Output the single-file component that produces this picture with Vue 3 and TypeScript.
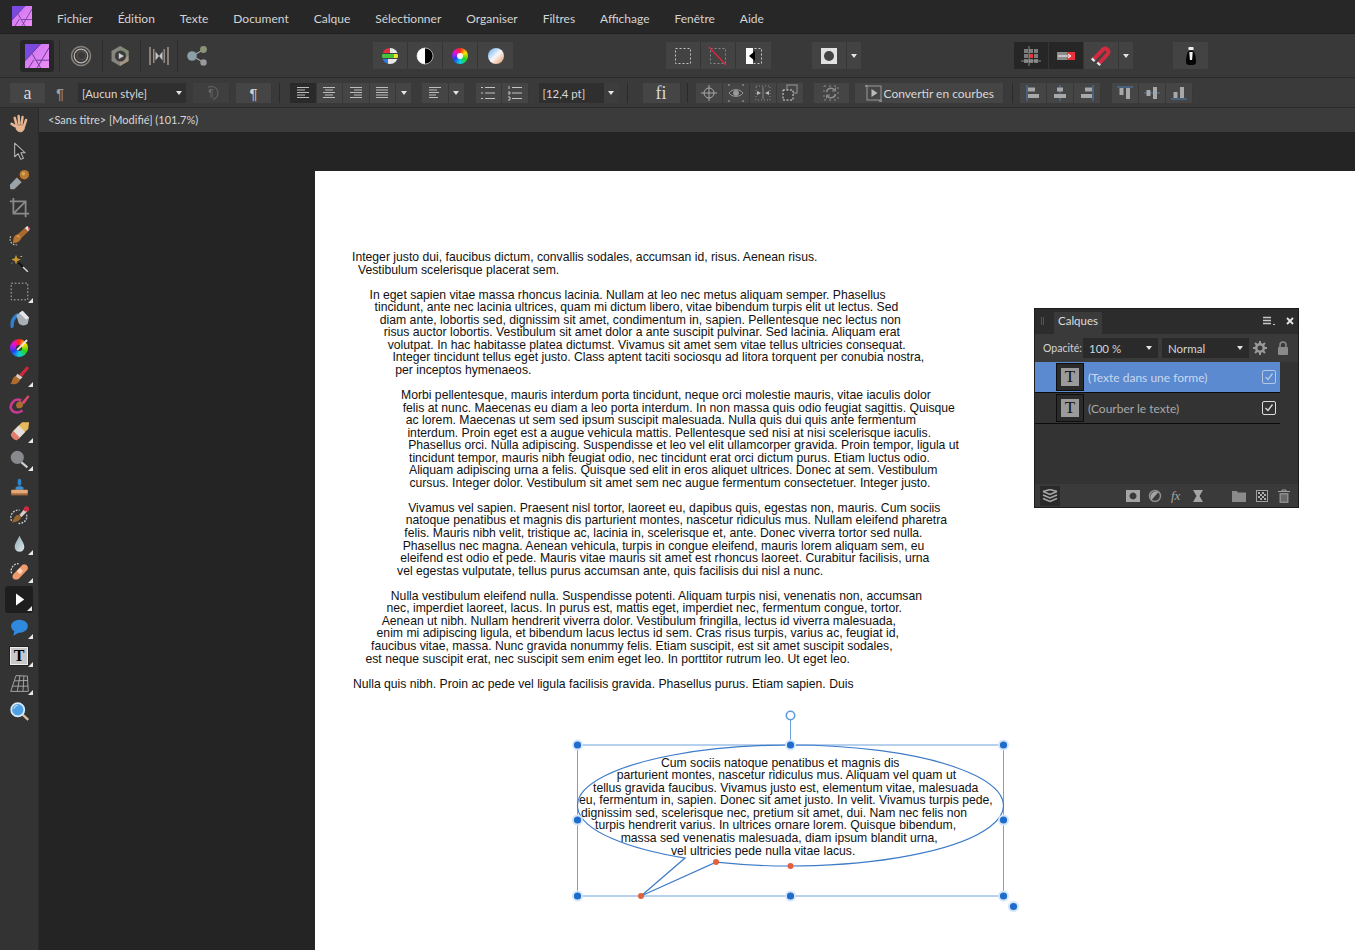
<script setup lang="ts">
type Line = [number, string];

const menus = ["Fichier", "Édition", "Texte", "Document", "Calque", "Sélectionner", "Organiser", "Filtres", "Affichage", "Fenêtre", "Aide"];

// x offset of each line comes from the text frame's curved left edge
const lines: Line[] = [
  [37, "Integer justo dui, faucibus dictum, convallis sodales, accumsan id, risus. Aenean risus."],
  [43, "Vestibulum scelerisque placerat sem."],
  [0, ""],
  [54.5, "In eget sapien vitae massa rhoncus lacinia. Nullam at leo nec metus aliquam semper. Phasellus"],
  [59.6, "tincidunt, ante nec lacinia ultrices, quam mi dictum libero, vitae bibendum turpis elit ut lectus. Sed"],
  [64.8, "diam ante, lobortis sed, dignissim sit amet, condimentum in, sapien. Pellentesque nec lectus non"],
  [68.7, "risus auctor lobortis. Vestibulum sit amet dolor a ante suscipit pulvinar. Sed lacinia. Aliquam erat"],
  [72.7, "volutpat. In hac habitasse platea dictumst. Vivamus sit amet sem vitae tellus ultricies consequat."],
  [77.4, "Integer tincidunt tellus eget justo. Class aptent taciti sociosqu ad litora torquent per conubia nostra,"],
  [80.2, "per inceptos hymenaeos."],
  [0, ""],
  [86, "Morbi pellentesque, mauris interdum porta tincidunt, neque orci molestie mauris, vitae iaculis dolor"],
  [87.7, "felis at nunc. Maecenas eu diam a leo porta interdum. In non massa quis odio feugiat sagittis. Quisque"],
  [90.8, "ac lorem. Maecenas ut sem sed ipsum suscipit malesuada. Nulla quis dui quis ante fermentum"],
  [92.4, "interdum. Proin eget est a augue vehicula mattis. Pellentesque sed nisi at nisi scelerisque iaculis."],
  [93.2, "Phasellus orci. Nulla adipiscing. Suspendisse et leo vel elit ullamcorper gravida. Proin tempor, ligula ut"],
  [94, "tincidunt tempor, mauris nibh feugiat odio, nec tincidunt erat orci dictum purus. Etiam luctus odio."],
  [94, "Aliquam adipiscing urna a felis. Quisque sed elit in eros aliquet ultrices. Donec at sem. Vestibulum"],
  [94.4, "cursus. Integer dolor. Vestibulum sit amet sem nec augue fermentum consectetuer. Integer justo."],
  [0, ""],
  [93.2, "Vivamus vel sapien. Praesent nisl tortor, laoreet eu, dapibus quis, egestas non, mauris. Cum sociis"],
  [90.8, "natoque penatibus et magnis dis parturient montes, nascetur ridiculus mus. Nullam eleifend pharetra"],
  [89.3, "felis. Mauris nibh velit, tristique ac, lacinia in, scelerisque et, ante. Donec viverra tortor sed nulla."],
  [87.7, "Phasellus nec magna. Aenean vehicula, turpis in congue eleifend, mauris lorem aliquam sem, eu"],
  [85.3, "eleifend est odio et pede. Mauris vitae mauris sit amet est rhoncus laoreet. Curabitur facilisis, urna"],
  [82.1, "vel egestas vulputate, tellus purus accumsan ante, quis facilisis dui nisl a nunc."],
  [0, ""],
  [75.8, "Nulla vestibulum eleifend nulla. Suspendisse potenti. Aliquam turpis nisi, venenatis non, accumsan"],
  [71.5, "nec, imperdiet laoreet, lacus. In purus est, mattis eget, imperdiet nec, fermentum congue, tortor."],
  [66.7, "Aenean ut nibh. Nullam hendrerit viverra dolor. Vestibulum fringilla, lectus id viverra malesuada,"],
  [61.6, "enim mi adipiscing ligula, et bibendum lacus lectus id sem. Cras risus turpis, varius ac, feugiat id,"],
  [56, "faucibus vitae, massa. Nunc gravida nonummy felis. Etiam suscipit, est sit amet suscipit sodales,"],
  [50.5, "est neque suscipit erat, nec suscipit sem enim eget leo. In porttitor rutrum leo. Ut eget leo."],
  [0, ""],
  [37.9, "Nulla quis nibh. Proin ac pede vel ligula facilisis gravida. Phasellus purus. Etiam sapien. Duis"],
];

const bubbleLines: Line[] = [
  [346, "Cum sociis natoque penatibus et magnis dis"],
  [301.7, "parturient montes, nascetur ridiculus mus. Aliquam vel quam ut"],
  [278, "tellus gravida faucibus. Vivamus justo est, elementum vitae, malesuada"],
  [264, "eu, fermentum in, sapien. Donec sit amet justo. In velit. Vivamus turpis pede,"],
  [266, "dignissim sed, scelerisque nec, pretium sit amet, dui. Nam nec felis non"],
  [280, "turpis hendrerit varius. In ultrices ornare lorem. Quisque bibendum,"],
  [305.7, "massa sed venenatis malesuada, diam ipsum blandit urna,"],
  [356, "vel ultricies pede nulla vitae lacus."],
];

const blueHandles = [
  [12.5, 45], [225.5, 45], [438.5, 45],
  [12.5, 120], [438.5, 120],
  [12.5, 196], [225.5, 196], [438.5, 196],
  [448.5, 206.5],
];
const redHandles = [[76, 196], [151, 162], [225.5, 166]];
</script>

<template>
  <div class="app">
    <header class="menubar">
      <svg class="app-logo" viewBox="0 0 20 20">
        <defs>
          <linearGradient id="lg" x1="0" y1="0" x2="1" y2="1">
            <stop offset="0" stop-color="#c870f0" />
            <stop offset="1" stop-color="#ee8ef6" />
          </linearGradient>
        </defs>
        <rect width="20" height="20" fill="url(#lg)" />
        <path d="M0 0H13L0 14Z" fill="#7a4ae0" />
        <path d="M0 14L13 0M20 3L10 20M6 8L13 20M9.500 13.500H20M3 20L7.500 13" stroke="#6a3a98" stroke-width="0.800" fill="none" />
      </svg>
      <nav class="menu">
        <span v-for="m in menus" :key="m">{{ m }}</span>
      </nav>
    </header>

    <div class="toolbar">
      <div class="persona active">
        <svg width="24" height="24" viewBox="0 0 20 20">
          <rect width="20" height="20" fill="url(#lg)" />
          <path d="M0 0H13L0 14Z" fill="#7a4ae0" />
          <path d="M0 14L13 0M20 3L10 20M6 8L13 20M9.500 13.500H20M3 20L7.500 13" stroke="#6a3a98" stroke-width="0.800" fill="none" />
        </svg>
      </div>
      <i class="tsep s1"></i>
      <div class="persona p2">
        <svg width="24" height="24" viewBox="0 0 24 24" fill="none">
          <circle cx="12" cy="12" r="9.500" stroke="#8a817a" stroke-width="1.500" />
          <circle cx="12" cy="12" r="6.800" stroke="#bdb8b4" stroke-width="1.200" />
          <circle cx="12.500" cy="11.500" r="4.200" stroke="#4f4f4f" stroke-width="1.400" />
        </svg>
      </div>
      <i class="tsep s2"></i>
      <div class="persona p3">
        <svg width="24" height="24" viewBox="0 0 24 24">
          <path d="M12 2L20.500 7V17L12 22L3.500 17V7Z" fill="#85877f" />
          <path d="M12 2L20.500 7V12H12Z" fill="#7f8a74" />
          <path d="M20.500 12V17L12 22V16Z" fill="#a89685" />
          <circle cx="12.500" cy="12" r="5.600" fill="#3c3c3c" />
          <path d="M10.800 9L16 12L10.800 15Z" fill="#cfcfcf" />
        </svg>
      </div>
      <i class="tsep s3"></i>
      <div class="persona p4">
        <svg width="24" height="24" viewBox="0 0 24 24">
          <path d="M2 3h2v18H2z" fill="#8f7d75" />
          <path d="M6 5h1.500v14H6z" fill="#8e8e8e" />
          <path d="M20 3h2v18h-2z" fill="#8f7d75" />
          <path d="M16.500 5H18v14h-1.500z" fill="#8e8e8e" />
          <path d="M8.500 7.500L12 12L8.500 16.500ZM15.500 7.500L12 12L15.500 16.500Z" fill="#c4c4c4" />
        </svg>
      </div>
      <i class="tsep s4"></i>
      <div class="persona p5">
        <svg width="24" height="24" viewBox="0 0 24 24">
          <path d="M7 12L18 6M7 12L18 18" stroke="#9aa6a6" stroke-width="1.400" />
          <circle cx="7" cy="12" r="4.800" fill="#8c9ea6" />
          <circle cx="18.500" cy="5.500" r="3.400" fill="#8c9476" />
          <circle cx="18.500" cy="18.500" r="3.200" fill="#9a9a9e" />
        </svg>
      </div>

      <div class="group g-colour">
        <button class="tb">
          <svg width="20" height="20" viewBox="0 0 20 20">
            <clipPath id="rgbClip"><circle cx="10" cy="10" r="8" /></clipPath>
            <g clip-path="url(#rgbClip)">
              <rect x="2" y="2" width="8" height="5" fill="#e23040" />
              <rect x="10" y="2" width="8" height="5" fill="#e8e8e8" />
              <rect x="2" y="8" width="12" height="4" fill="#46c43c" />
              <rect x="14" y="8" width="4" height="4" fill="#e8e830" />
              <rect x="2" y="13" width="6" height="5" fill="#2b7ee0" />
              <rect x="8" y="13" width="10" height="5" fill="#e8e8e8" />
            </g>
          </svg>
        </button>
        <button class="tb">
          <svg width="20" height="20" viewBox="0 0 20 20">
            <circle cx="10" cy="10" r="8" fill="#000" stroke="#fff" stroke-width="0.600" />
            <path d="M10 2A8 8 0 0 0 10 18Z" fill="#fff" />
          </svg>
        </button>
        <button class="tb"><span class="wheel"></span></button>
        <button class="tb">
          <svg width="20" height="20" viewBox="0 0 20 20">
            <defs>
              <linearGradient id="ball" x1="0" y1="0" x2="1" y2="1">
                <stop offset="0" stop-color="#5aa6ee" />
                <stop offset="0.500" stop-color="#f8f8f8" />
                <stop offset="1" stop-color="#e69460" />
              </linearGradient>
            </defs>
            <circle cx="10" cy="10" r="8" fill="url(#ball)" />
          </svg>
        </button>
      </div>

      <div class="group g-sel">
        <button class="tb">
          <svg width="20" height="20" viewBox="0 0 20 20"><rect x="2.500" y="2.500" width="15" height="15" fill="none" stroke="#c4c4c4" stroke-dasharray="2 2" /></svg>
        </button>
        <button class="tb">
          <svg width="20" height="20" viewBox="0 0 20 20">
            <rect x="2.500" y="2.500" width="15" height="15" fill="none" stroke="#888" stroke-dasharray="2 2" />
            <path d="M1 1L18 19" stroke="#d02840" stroke-width="1.600" />
          </svg>
        </button>
        <button class="tb">
          <svg width="20" height="20" viewBox="0 0 20 20">
            <rect x="2.500" y="2.500" width="15" height="15" fill="none" stroke="#ccc" stroke-dasharray="2 2" />
            <rect x="2" y="2" width="7" height="16" fill="#fff" />
            <path d="M11 5L5 10L11 15Z" fill="#000" />
          </svg>
        </button>
      </div>

      <div class="group g-mask">
        <button class="tb">
          <svg width="20" height="20" viewBox="0 0 20 20">
            <rect x="2" y="2" width="16" height="16" fill="#e2e2e2" />
            <circle cx="10" cy="10" r="5" fill="#444" />
          </svg>
        </button>
        <button class="tb drop"><i class="caret"></i></button>
      </div>

      <div class="group g-snap">
        <button class="tb dark">
          <svg width="20" height="20" viewBox="0 0 20 20">
            <path d="M3 3h4v4H3zM8 3h4v4H8zM13 3h4v4h-4zM3 8h4v4H3zM13 8h4v4h-4zM3 13h4v4H3zM8 13h4v4H8zM13 13h4v4h-4z" fill="#7c7c7c" />
            <rect x="8" y="8" width="4" height="4" fill="#e8323c" />
            <path d="M0 15h20M8 0v20" stroke="#a0a0a0" stroke-width="0.800" />
          </svg>
        </button>
        <button class="tb dark">
          <svg width="20" height="20" viewBox="0 0 20 20">
            <rect x="1" y="6" width="10" height="8" fill="#8c8c8c" />
            <rect x="11" y="6" width="8" height="8" fill="#e8323c" />
            <path d="M2 10h12M12 8l3 2-3 2" stroke="#fff" fill="none" />
          </svg>
        </button>
        <button class="tb">
          <svg width="22" height="22" viewBox="0 0 22 22" fill="none">
            <path d="M4 14L13 4.500C15.500 2.200 19.500 4.800 18 8.500L9.500 18" stroke="#d32a40" stroke-width="4" />
            <path d="M4 14L2.400 15.600M9.500 18L8 19.600" stroke="#e6e6e6" stroke-width="4" />
          </svg>
        </button>
        <button class="tb drop"><i class="caret"></i></button>
      </div>

      <div class="group g-assist">
        <button class="tb">
          <svg width="20" height="22" viewBox="0 0 20 22">
            <path d="M5 17.500C5 10 6.500 5.500 10 5.500S15 10 15 17.500C15 19.500 13 20 10 20S5 19.500 5 17.500Z" fill="#050505" />
            <path d="M8.300 7h3.400l-.6 8H8.900Z" fill="#f2f2f2" />
            <rect x="7.400" y="2" width="5.200" height="3" rx="1" fill="#f0f0f0" />
          </svg>
        </button>
      </div>
    </div>

    <div class="context">
      <button class="ct c-a"><span class="serif">a</span></button>
      <span class="pilcrow dim">¶</span>
      <div class="select c-style"><span>[Aucun style]</span><i class="caret"></i></div>
      <button class="ct c-par dimbtn">
        <svg width="18" height="18" viewBox="0 0 18 18" fill="none">
          <path d="M6 3.500A6.500 6.500 0 1 1 11 15.300" stroke="#5f5f5f" stroke-width="1.200" />
          <text x="9" y="13" class="mini-p">¶</text>
        </svg>
      </button>
      <button class="ct c-par2"><span class="pilcrow">¶</span></button>
      <i class="csep cs1"></i>

      <div class="cgroup c-align">
        <button class="ct w26 dark">
          <svg width="14" height="14" viewBox="0 0 14 14"><path d="M1 1.500h12M1 4h8M1 6.500h12M1 9h8M1 11.500h12" stroke="#bdbdbd" /></svg>
        </button>
        <button class="ct w26">
          <svg width="14" height="14" viewBox="0 0 14 14"><path d="M1 1.500h12M3 4h8M1 6.500h12M3 9h8M1 11.500h12" stroke="#bdbdbd" /></svg>
        </button>
        <button class="ct w26">
          <svg width="14" height="14" viewBox="0 0 14 14"><path d="M1 1.500h12M5 4h8M1 6.500h12M5 9h8M1 11.500h12" stroke="#bdbdbd" /></svg>
        </button>
        <button class="ct w26">
          <svg width="14" height="14" viewBox="0 0 14 14"><path d="M1 1.500h12M1 4h12M1 6.500h12M1 9h12M1 11.500h12" stroke="#bdbdbd" /></svg>
        </button>
        <button class="ct drop"><i class="caret"></i></button>
      </div>
      <div class="cgroup c-align2">
        <button class="ct w26">
          <svg width="14" height="14" viewBox="0 0 14 14"><path d="M1 1.500h12M1 4h8M1 6.500h10M1 9h7M1 11.500h9" stroke="#bdbdbd" /></svg>
        </button>
        <button class="ct drop"><i class="caret"></i></button>
      </div>
      <div class="cgroup c-list">
        <button class="ct w26">
          <svg width="16" height="16" viewBox="0 0 16 16"><path d="M5 2.500h10M5 8h10M5 13.500h10M1 2.500h2M1 8h2M1 13.500h2" stroke="#c4c4c4" /></svg>
        </button>
        <button class="ct w26">
          <svg width="16" height="16" viewBox="0 0 16 16"><path d="M5 2.500h10M5 8h10M5 13.500h10M2 1v3M1 7h2v2H1M1 12h2v3H1" stroke="#c4c4c4" fill="none" /></svg>
        </button>
      </div>
      <div class="select c-size"><span>[12,4 pt]</span><b class="drop-in"><i class="caret"></i></b></div>
      <i class="csep cs2"></i>
      <button class="ct c-fi"><span class="serif fi">fi</span></button>
      <i class="csep cs3"></i>

      <div class="cgroup c-trans">
        <button class="ct w27">
          <svg width="16" height="16" viewBox="0 0 16 16" fill="none" stroke="#a8a8a8"><circle cx="8" cy="8" r="5" /><path d="M8 0v16M0 8h16" /></svg>
        </button>
        <button class="ct w27">
          <svg width="18" height="18" viewBox="0 0 18 18" fill="none" stroke="#999"><path d="M2 9C5 4.500 13 4.500 16 9C13 13.500 5 13.500 2 9Z" /><circle cx="9" cy="9" r="2.500" fill="#999" /><path d="M1 1h2M15 1h2M1 17h2M15 17h2" stroke="#777" stroke-width="2" /></svg>
        </button>
        <button class="ct w27">
          <svg width="18" height="18" viewBox="0 0 18 18" fill="none" stroke="#888"><rect x="2" y="2" width="14" height="14" stroke-dasharray="1 2" /><path d="M9 3v12" /><path d="M3 7l4 2-4 2ZM15 7l-4 2 4 2Z" fill="#bbb" stroke="none" /></svg>
        </button>
        <button class="ct w27">
          <svg width="18" height="18" viewBox="0 0 18 18" fill="none"><rect x="6" y="1" width="10" height="8" stroke="#999" /><rect x="2" y="6" width="10" height="10" fill="#3f3f3f" stroke="#ddd" stroke-dasharray="2 1.500" /></svg>
        </button>
      </div>
      <button class="ct c-rot">
        <svg width="18" height="18" viewBox="0 0 18 18" fill="none" stroke="#8c8c8c"><rect x="2" y="2" width="14" height="14" stroke-dasharray="2 3" /><path d="M4.500 8A4.600 4.600 0 0 1 13 6.500M13.500 10A4.600 4.600 0 0 1 5 11.500" stroke-width="1.500" /><path d="M13.500 3.500v3.500h-3.500M4.500 14.500V11H8" /></svg>
      </button>
      <button class="ct c-conv">
        <svg width="18" height="18" viewBox="0 0 18 18" fill="none"><rect x="2" y="2" width="14" height="14" stroke="#999" /><path d="M6.500 5l6 4-6 4Z" fill="#bbb" /><path d="M0 2h3M14 17h3" stroke="#888" stroke-width="2" /></svg>
        <span>Convertir en courbes</span>
      </button>
      <i class="csep cs4"></i>

      <div class="cgroup c-al1">
        <button class="ct w27">
          <svg width="18" height="18" viewBox="0 0 18 18"><path d="M3 1v16" stroke="#4d7fb0" /><path d="M4 3.500h7v4H4zM4 10h11v4H4z" fill="#a8a8a8" /></svg>
        </button>
        <button class="ct w27">
          <svg width="18" height="18" viewBox="0 0 18 18"><path d="M9 1v16" stroke="#4d7fb0" /><path d="M6 3.500h6v4H6zM3 10h12v4H3z" fill="#a8a8a8" /></svg>
        </button>
        <button class="ct w27">
          <svg width="18" height="18" viewBox="0 0 18 18"><path d="M15 1v16" stroke="#4d7fb0" /><path d="M7 3.500h7v4H7zM3 10h11v4H3z" fill="#a8a8a8" /></svg>
        </button>
      </div>
      <div class="cgroup c-al2">
        <button class="ct w27">
          <svg width="18" height="18" viewBox="0 0 18 18"><path d="M1 3h16" stroke="#4d7fb0" /><path d="M3.500 4h4v7h-4zM10 4h4v11h-4z" fill="#a8a8a8" /></svg>
        </button>
        <button class="ct w27">
          <svg width="18" height="18" viewBox="0 0 18 18"><path d="M1 9h16" stroke="#4d7fb0" /><path d="M3.500 6h4v6h-4zM10 3h4v12h-4z" fill="#a8a8a8" /></svg>
        </button>
        <button class="ct w27">
          <svg width="18" height="18" viewBox="0 0 18 18"><path d="M1 15h16" stroke="#4d7fb0" /><path d="M3.500 8h4v6h-4zM10 3h4v11h-4z" fill="#a8a8a8" /></svg>
        </button>
      </div>
    </div>

    <div class="work">
      <aside class="tools">
        <div class="tool">
          <svg viewBox="0 0 24 24" fill="none" stroke="#e8b592" stroke-linecap="round">
            <path d="M8.500 13L6.500 5.500M11.500 12L11 3.500M14.500 12L15.500 4.500M17.500 14L19.500 8" stroke-width="2.800" />
            <path d="M7 15L3 12.500" stroke-width="3" />
            <path d="M8 14C7 19 10 21.500 13 21.500S18 19 18 14Z" fill="#e8b592" stroke-width="1" />
          </svg>
        </div>
        <div class="tool">
          <svg viewBox="0 0 24 24"><path d="M6.500 2.500V18L10.500 14.500L13.500 21L16.500 19.700L13.500 13.500H18.500Z" fill="#2a2a2a" stroke="#b8b8b8" stroke-width="1.200" stroke-linejoin="round" /></svg>
        </div>
        <div class="tool">
          <svg viewBox="0 0 24 24">
            <path d="M1.500 23L1 18L9.500 9L15 14.500L6 23Z" fill="#9aa3aa" />
            <path d="M9 8L16 15" stroke="#4c2f14" stroke-width="2.400" />
            <circle cx="17.500" cy="6.500" r="5.400" fill="#b97a32" />
            <circle cx="16.500" cy="5.500" r="2" fill="#d8a860" />
          </svg>
        </div>
        <div class="tool">
          <svg viewBox="0 0 24 24" fill="none" stroke="#8a8a8a" stroke-width="2"><path d="M5 1V19H23M1 5H19V23M5 19L19 5" /></svg>
        </div>
        <div class="tool">
          <svg viewBox="0 0 24 24" fill="none">
            <path d="M9 11.500L18 3.500L22 7.500L13 16Z" fill="#a86a2c" />
            <path d="M18 3.500L21 1L24 4L22 7.500Z" fill="#e8e0dc" />
            <path d="M21.500 1.500L24 4L22.500 6.500Z" fill="#d03c48" />
            <path d="M6 13C9 8.500 15 11.500 13.500 16C11.500 20 7 21 4.500 20.500C5 18 4.500 15.500 6 13Z" fill="#b8752f" />
            <path d="M9 13C10 12 11 12.500 12 14" stroke="#e0b070" stroke-width="1.200" />
            <path d="M2 13C-0.500 18 3.500 23.500 9 22.500" stroke="#d8c8a8" stroke-width="1.300" stroke-dasharray="1.800 1.500" />
          </svg>
        </div>
        <div class="tool">
          <svg viewBox="0 0 24 24">
            <path d="M11 11L21 21" stroke="#111" stroke-width="2.200" />
            <path d="M16 16L21.500 21.500" stroke="#ddd" stroke-width="1.800" />
            <path d="M8 2L9.500 6L13.500 7.500L9.500 9L8 13L6.500 9L2.500 7.500L6.500 6Z" fill="#c8982c" />
            <path d="M13 4h2M3 12l1-1" stroke="#d8c070" />
          </svg>
        </div>
        <div class="tool more">
          <svg viewBox="0 0 24 24"><rect x="2.500" y="2.500" width="19" height="19" fill="none" stroke="#bdbdbd" stroke-dasharray="2 2" /></svg>
        </div>
        <div class="tool">
          <svg viewBox="0 0 24 24">
            <path d="M2 21C0.500 13 4 7 10 4.500L12.500 8C8 9.500 5.500 13.500 5.500 19C5.500 21.500 2.500 22.500 2 21Z" fill="#2d7fd0" />
            <path d="M8.500 7L15.500 2L23 10L21.500 16.500C18 20 13 19 11 16Z" fill="#a8b0b6" />
            <path d="M15.500 2L23 10L19.500 12L11.500 4.500Z" fill="#e4e7ea" />
          </svg>
        </div>
        <div class="tool">
          <span class="wheel tool-wheel"></span>
          <svg class="over" viewBox="0 0 24 24"><path d="M10 13L20 3" stroke="#e8e8e8" stroke-width="2.400" stroke-linecap="round" /></svg>
        </div>
        <div class="tool more">
          <svg viewBox="0 0 24 24">
            <path d="M11.500 11L20.500 1.500L23 3.500L15 13.500Z" fill="#d0283c" />
            <path d="M9.500 10L15.500 14L12 17L7 14Z" fill="#d8d0c8" />
            <path d="M7.500 12.500C3 14 4.500 19 1.500 21.500C7 23 12 21 12.500 16.500Z" fill="#b06c2c" />
          </svg>
        </div>
        <div class="tool">
          <svg viewBox="0 0 24 24" fill="none">
            <path d="M14 8.500C6 4.500 -1 14.500 3.500 20C7 23.500 12 22.500 15.500 20" stroke="#c83a92" stroke-width="3" />
            <path d="M15 10C9 7 5.500 15.500 10.500 17.500C14.500 18 18 15 15 10Z" fill="#a96c33" />
            <path d="M14.500 10.500L21.500 2.500L23.500 4L17 13" fill="#d84a66" />
          </svg>
        </div>
        <div class="tool more">
          <svg viewBox="0 0 24 24">
            <path d="M15 1.500L23 1.500L22 9L11 19L4 12Z" fill="#e8b85c" />
            <path d="M11 5L18.500 12.500L11 20.500L3.500 13.500Z" fill="#e4e0dc" />
            <path d="M5 11.500L12.500 19L9 22C6 22 2.500 18.500 2 15Z" fill="#e27c6c" />
          </svg>
        </div>
        <div class="tool more">
          <svg viewBox="0 0 24 24">
            <path d="M14 15L21 21" stroke="#cfcfcf" stroke-width="2.400" />
            <circle cx="9.500" cy="9.500" r="7.500" fill="#87898c" />
          </svg>
        </div>
        <div class="tool">
          <svg viewBox="0 0 24 24">
            <rect x="10" y="2" width="4" height="8" rx="2" fill="#2d84c8" />
            <path d="M7.500 12C9 10 15 10 16.500 12V14.500H7.500Z" fill="#3a8fcc" />
            <rect x="2.500" y="14.500" width="19" height="4.500" rx="1" fill="#e7a877" />
            <rect x="2.500" y="19" width="19" height="2" fill="#a8693c" />
          </svg>
        </div>
        <div class="tool">
          <svg viewBox="0 0 24 24" fill="none">
            <path d="M3 18C0 12 5 5 12 6" stroke="#cfcfcf" stroke-width="1.500" stroke-dasharray="2 1.500" />
            <path d="M20 11C22 17 16 22 10 21" stroke="#cfcfcf" stroke-width="1.500" stroke-dasharray="2 1.500" />
            <path d="M7 13C11 9 15 13 13 16C10 19 7 20 3 20C5 18 5 15 7 13Z" fill="#9a6430" />
            <path d="M12 11L18 4L21 7L14 14Z" fill="#d8cfc8" />
            <circle cx="20" cy="4.500" r="3" fill="#cf2a3e" />
          </svg>
        </div>
        <div class="tool more">
          <svg viewBox="0 0 24 24">
            <defs>
              <linearGradient id="drop" x1="0" y1="0" x2="1" y2="1">
                <stop offset="0" stop-color="#8faab6" />
                <stop offset="1" stop-color="#dfe8ea" />
              </linearGradient>
            </defs>
            <path d="M12 3C10 8 6.500 11.500 6.500 16A5.500 5.500 0 0 0 17.500 16C17.500 11.500 14 8 12 3Z" fill="url(#drop)" />
          </svg>
        </div>
        <div class="tool more">
          <svg viewBox="0 0 24 24" fill="none">
            <path d="M3 14C1 9 5 3 11 3" stroke="#d8d8d8" stroke-width="1.500" stroke-dasharray="2 1.500" />
            <path d="M5 15L15 4.500C18.500 2 23.500 6.500 21 10L11 20.500C6 23 2 19 5 15Z" fill="#ef9a6a" />
            <rect x="10" y="9" width="5" height="5" transform="rotate(45 12.500 11.500)" fill="#f9d7bf" />
          </svg>
        </div>
        <div class="tool more selected">
          <svg class="play" viewBox="0 0 24 24"><path d="M8 4.500L19 12.500L8 20.500Z" fill="#fff" /></svg>
        </div>
        <div class="tool more">
          <svg viewBox="0 0 24 24">
            <ellipse cx="12" cy="10.500" rx="9.500" ry="7.500" fill="#2f8ade" />
            <path d="M6 16L5 21.500L12 17.500Z" fill="#2f8ade" />
          </svg>
        </div>
        <div class="tool more">
          <span class="t-box">T</span>
        </div>
        <div class="tool more">
          <svg viewBox="0 0 24 24" fill="none" stroke="#b0b0b0"><path d="M8 3L21 3.500L22 21L2 21ZM12.500 3L9.500 21M17 3.500L16 21M6.500 9L21.500 8.500M4 15H22" /></svg>
        </div>
        <div class="tool">
          <svg viewBox="0 0 24 24" fill="none">
            <path d="M15 15L22 21.500" stroke="#d8c0a0" stroke-width="2.600" />
            <circle cx="10" cy="10" r="7.500" fill="#4d9fe6" stroke="#d6ecf8" stroke-width="2" />
            <path d="M5.500 9A4.800 4.800 0 0 1 10 5" stroke="#dff" />
          </svg>
        </div>
      </aside>

      <main class="main">
        <div class="tabstrip">&lt;Sans titre&gt; [Modifié] (101.7%)</div>
        <div class="canvas">
          <div class="page">
            <div
              v-for="(l, i) in lines"
              :key="i"
              class="line"
              :style="{ marginLeft: l[0] + 'px' }"
            >{{ l[1] }}</div>

            <div class="bubble-text">
              <div
                v-for="(l, i) in bubbleLines"
                :key="i"
                class="line"
                :style="{ marginLeft: l[0] + 'px' }"
              >{{ l[1] }}</div>
            </div>

            <svg class="selection" width="460" height="220" viewBox="0 0 460 220" fill="none">
              <rect x="12.500" y="45" width="426" height="151" stroke="#6ea2dc" />
              <path d="M225.500 20V45" stroke="#6ea2dc" />
              <path d="M151 162.180A213 60.500 0 1 0 120 158.060L76 196Z" stroke="#3f7cc8" stroke-width="1.200" />
              <circle cx="225.500" cy="15.500" r="4.200" fill="#fff" stroke="#5b9ae0" stroke-width="1.600" />
              <g v-for="(h, i) in blueHandles" :key="i">
                <circle :cx="h[0]" :cy="h[1]" r="5.500" fill="#d4e6fa" />
                <circle :cx="h[0]" :cy="h[1]" r="3.600" fill="#1f6ccc" />
              </g>
              <circle v-for="(h, i) in redHandles" :key="'r' + i" :cx="h[0]" :cy="h[1]" r="3" fill="#e2603c" />
            </svg>
          </div>

          <section class="panel">
            <div class="p-head">
              <span class="grip"></span>
              <span class="p-tab">Calques</span>
              <svg class="p-menu" width="12" height="10" viewBox="0 0 12 10"><path d="M0 1.500h8M0 4.500h8M0 7.500h8" stroke="#c8c8c8" stroke-width="1.300" /><path d="M10 8.500h2" stroke="#c8c8c8" /></svg>
              <svg class="p-close" width="8" height="8" viewBox="0 0 8 8"><path d="M1 1l6 6M7 1L1 7" stroke="#e4e4e4" stroke-width="1.800" /></svg>
            </div>
            <div class="p-opts">
              <span class="op-label">Opacité:</span>
              <div class="p-select sel-op"><span>100 %</span><i class="caret"></i></div>
              <div class="p-select sel-mode"><span>Normal</span><i class="caret"></i></div>
              <svg class="gear" width="14" height="14" viewBox="0 0 14 14">
                <circle cx="7" cy="7" r="3.800" fill="none" stroke="#9a9a9a" stroke-width="2.600" />
                <path d="M7 0v3M7 11v3M0 7h3M11 7h3M2 2l2 2M10 10l2 2M12 2l-2 2M4 10l-2 2" stroke="#9a9a9a" stroke-width="2" />
              </svg>
              <svg class="lock" width="12" height="14" viewBox="0 0 12 14">
                <path d="M3 6V4A3 3 0 0 1 9 4V6" fill="none" stroke="#8a8a8a" stroke-width="1.500" />
                <rect x="1" y="6" width="10" height="8" rx="1" fill="#8a8a8a" />
              </svg>
            </div>
            <div class="layers">
              <div class="layer active">
                <span class="thumb"><span class="thumb-t">T</span></span>
                <span class="l-name">(Texte dans une forme)</span>
                <span class="check"><svg width="10" height="10" viewBox="0 0 10 10"><path d="M1.500 5L4 7.500L8.500 1.500" fill="none" stroke="currentColor" stroke-width="1.300" /></svg></span>
              </div>
              <div class="layer">
                <span class="thumb"><span class="thumb-t">T</span></span>
                <span class="l-name">(Courber le texte)</span>
                <span class="check"><svg width="10" height="10" viewBox="0 0 10 10"><path d="M1.500 5L4 7.500L8.500 1.500" fill="none" stroke="currentColor" stroke-width="1.300" /></svg></span>
              </div>
            </div>
            <div class="p-foot">
              <span class="stack">
                <svg width="16" height="14" viewBox="0 0 16 14" fill="none" stroke="#a8a8a8" stroke-width="1.500"><path d="M1 2.500L8 5.500L15 2.500M1 6L8 9L15 6M1 9.500L8 12.500L15 9.500" /><path d="M1 2.500L8 0.500L15 2.500" /></svg>
              </span>
              <svg class="f1" width="14" height="14" viewBox="0 0 14 14"><path fill-rule="evenodd" d="M0 1h14v12H0ZM7 3.500a3.500 3.500 0 1 0 .01 0Z" fill="#a4a4a4" /></svg>
              <svg class="f2" width="14" height="14" viewBox="0 0 14 14"><circle cx="7" cy="7" r="5.500" fill="none" stroke="#8c8c8c" stroke-width="1.500" /><path d="M3.500 11A5.500 5.500 0 0 1 10.500 3Z" fill="#a4a4a4" /></svg>
              <span class="fx">fx</span>
              <svg class="f3" width="12" height="14" viewBox="0 0 12 14"><path d="M1 1h10L7.500 7L11 13H1L4.500 7Z" fill="#a4a4a4" /></svg>
              <svg class="f4" width="14" height="12" viewBox="0 0 14 12"><path d="M0 1h5l1 1.500h8V12H0Z" fill="#8a8a8a" /></svg>
              <svg class="f5" width="12" height="12" viewBox="0 0 12 12"><rect x="0.500" y="0.500" width="11" height="11" fill="#333" stroke="#a0a0a0" /><path d="M2 2h2v2H2zM6 2h2v2H6zM4 4h2v2H4zM8 4h2v2H8zM2 6h2v2H2zM6 6h2v2H6zM4 8h2v2H4zM8 8h2v2H8z" fill="#b0b0b0" /></svg>
              <svg class="f6" width="12" height="14" viewBox="0 0 12 14"><path d="M0 2.500h12M4 2V1h4v1" stroke="#a0a0a0" fill="none" /><path d="M1.500 4h9v10h-9Z" fill="#8c8c8c" /><path d="M4 5.500v7M6 5.500v7M8 5.500v7" stroke="#333" stroke-width="0.800" /></svg>
            </div>
          </section>
        </div>
      </main>
    </div>
  </div>
</template>

<style>
html,
body {
  margin: 0;
  background: #242424;
}
</style>

<style scoped>
.app {
  width: 1355px;
  height: 950px;
  overflow: hidden;
  display: flex;
  flex-direction: column;
  background: #242424;
  font-family: "Lato", "Open Sans", sans-serif;
  color: #cfcfcf;
}

.menubar {
  height: 34px;
  flex: none;
  display: flex;
  align-items: flex-start;
  background: #272727;
  box-sizing: border-box;
  border-bottom: 1px solid #1f1f1f;
}
.app-logo {
  width: 20px;
  height: 20px;
  margin: 6px 0 0 12px;
}
.menu {
  display: flex;
  gap: 25px;
  margin: 11px 0 0 25px;
  font-size: 12px;
  line-height: 15px;
  color: #d4d4d4;
}

.toolbar {
  height: 44px;
  flex: none;
  box-sizing: border-box;
  display: flex;
  align-items: center;
  background: #393939;
  border-bottom: 1px solid #2b2b2b;
}
.persona {
  display: flex;
  align-items: center;
  justify-content: center;
  width: 24px;
  height: 32px;
}
.persona.active {
  width: 34px;
  margin-left: 20px;
  background: #262626;
  border-radius: 3px;
}
.tsep {
  width: 1px;
  height: 32px;
  background: #2c2c2c;
}
.s1 { margin-left: 5px; }
.s2 { margin-left: 9px; }
.s3 { margin-left: 8px; }
.s4 { margin-left: 6px; }
.p2 { margin-left: 9px; }
.p3 { margin-left: 5px; }
.p4 { margin-left: 6px; }
.p5 { margin-left: 7px; }

.group {
  display: flex;
  height: 27px;
}
.g-colour { margin-left: 164px; }
.g-sel { margin-left: 153px; }
.g-mask { margin-left: 41px; }
.g-snap { margin-left: 153px; }
.g-assist { margin-left: 40px; }

.tb {
  width: 35px;
  height: 27px;
  padding: 0;
  border: 0;
  border-right: 1px solid #353535;
  background: #434343;
  display: flex;
  align-items: center;
  justify-content: center;
}
.tb.dark { background: #262626; }
.tb.drop { width: 14px; border-right: 0; }
.tb:last-child { border-right: 0; }

.caret {
  display: block;
  width: 0;
  height: 0;
  border-left: 3.500px solid transparent;
  border-right: 3.500px solid transparent;
  border-top: 4px solid #e4e4e4;
}
.wheel {
  display: block;
  width: 16px;
  height: 16px;
  border-radius: 50%;
  background: conic-gradient(#ff2020, #ffe000, #20d820, #10d0e0, #2040f0, #e010e0, #ff2020);
  position: relative;
}
.wheel::after {
  content: "";
  position: absolute;
  inset: 5px;
  border-radius: 50%;
  background: #f4f4f4;
}

.context {
  height: 30px;
  flex: none;
  box-sizing: border-box;
  display: flex;
  align-items: center;
  padding-top: 1px;
  background: #3a3a3a;
  border-bottom: 1px solid #2a2a2a;
  font-size: 12px;
}
.ct {
  height: 20px;
  padding: 0;
  border: 0;
  border-right: 1px solid #383838;
  background: #454545;
  color: #d8d8d8;
  display: flex;
  align-items: center;
  justify-content: center;
  font-family: inherit;
}
.ct.dark { background: #2a2a2a; }
.ct.drop {
  width: 15px;
  border-right: 0;
}
.w26 { width: 26.500px; }
.w27 { width: 27px; }
.cgroup {
  display: flex;
  height: 20px;
}
.serif {
  font-family: "Liberation Serif", serif;
  font-size: 18px;
  line-height: 20px;
  color: #d8d8d8;
}
.fi { font-size: 18px; }
.pilcrow {
  font-family: "Liberation Sans", sans-serif;
  font-size: 15px;
  color: #d0d0d0;
}
.pilcrow.dim {
  width: 10px;
  margin-left: 10px;
  color: #9d9d9d;
}
.mini-p {
  font: 10px "Liberation Sans", sans-serif;
  fill: #6b6b6b;
  text-anchor: middle;
}
.select {
  height: 20px;
  box-sizing: border-box;
  background: #2f2f2f;
  display: flex;
  align-items: center;
  justify-content: space-between;
  padding-left: 4px;
  color: #d8d8d8;
  font-size: 11.400px;
}

.c-a { width: 36px; margin-left: 10px; }
.c-style { width: 108px; margin-left: 12px; padding-right: 4px; }
.c-par { width: 37px; margin-left: 7px; }
.dimbtn { background: #3f3f3f; }
.c-par2 { width: 36px; margin-left: 6px; }
.csep {
  width: 1px;
  height: 20px;
  background: #2a2a2a;
}
.cs1 { margin-left: 7px; }
.c-align { margin-left: 10px; }
.c-align2 { margin-left: 11px; }
.c-list { margin-left: 12px; }
.c-size { width: 79px; margin-left: 10px; }
.drop-in {
  width: 14px;
  height: 20px;
  background: #3d3d3d;
  display: flex;
  align-items: center;
  justify-content: center;
}
.cs2 { margin-left: 9px; }
.c-fi { width: 38px; margin-left: 15px; }
.cs3 { margin-left: 6px; }
.c-trans { margin-left: 8.500px; }
.c-rot { width: 36px; margin-left: 9.500px; }
.c-conv {
  width: 149px;
  margin-left: 5px;
  padding-left: 10px;
  justify-content: flex-start;
  gap: 1px;
  font-size: 12px;
  white-space: nowrap;
}
.cs4 { margin-left: 8px; }
.c-al1 { margin-left: 7.500px; }
.c-al2 { margin-left: 11px; }

.work {
  flex: 1;
  min-height: 0;
  display: grid;
  grid-template-columns: 39px 1fr;
}
.tools {
  background: #333;
  border-right: 1px solid #2a2a2a;
  box-sizing: border-box;
  padding-top: 1.500px;
}
.tool {
  position: relative;
  width: 38px;
  height: 28px;
  display: flex;
  align-items: center;
  justify-content: center;
}
.tool > svg {
  width: 21px;
  height: 21px;
}
.tool > svg.over {
  position: absolute;
  left: 9px;
  top: 4px;
}
.tool.more::after {
  content: "";
  position: absolute;
  right: 5px;
  bottom: 3px;
  width: 0;
  height: 0;
  border-left: 5px solid transparent;
  border-bottom: 5px solid #e8e8e8;
}
.tool.selected {
  width: 28px;
  height: 27px;
  margin: 0 0 1px 5px;
  border-radius: 3px;
  background: #1e1e1e;
}
.tool.selected::after { right: 1px; bottom: 2px; }
.tool > svg.play {
  width: 18px;
  height: 18px;
}
.tool-wheel {
  width: 18px;
  height: 18px;
}
.tool-wheel::after { inset: 6px; background: #333; }
.t-box {
  width: 16px;
  height: 16px;
  border: 1.500px solid #eee;
  outline: 1px solid #222;
  background: #c8c8c8;
  color: #000;
  font: bold 16px/16px "Liberation Serif", serif;
  text-align: center;
}

.main {
  display: flex;
  flex-direction: column;
  min-width: 0;
}
.tabstrip {
  height: 24px;
  flex: none;
  box-sizing: border-box;
  padding-left: 9px;
  background: #3b3b3b;
  font-size: 11px;
  line-height: 24px;
  color: #d8d8d8;
}
.canvas {
  flex: 1;
  position: relative;
  padding: 39px 0 0 276px;
  background: #242424;
  overflow: hidden;
}
.page {
  position: relative;
  height: 100%;
  box-sizing: border-box;
  padding-top: 80px;
  background: #fff;
}
.line {
  height: 12.550px;
  font: 12.200px/12.550px "Liberation Sans", Arial, sans-serif;
  color: #111;
  white-space: pre;
}
.bubble-text {
  position: absolute;
  left: 0;
  top: 585.700px;
}
.selection {
  position: absolute;
  left: 250px;
  top: 529px;
}

.panel {
  position: absolute;
  left: 995px;
  top: 176px;
  width: 265px;
  height: 200px;
  box-sizing: border-box;
  border: 1px solid #1c1c1c;
  display: flex;
  flex-direction: column;
  background: #333;
}
.p-head {
  height: 25px;
  flex: none;
  display: flex;
  align-items: flex-end;
  background: #2c2c2c;
  position: relative;
}
.grip {
  width: 3px;
  height: 8px;
  margin: 0 0 9px 6px;
  border-left: 1px solid #555;
  border-right: 1px solid #555;
  box-sizing: border-box;
}
.p-tab {
  width: 48px;
  height: 22px;
  margin-left: 10px;
  background: #3a3a3a;
  text-align: center;
  font-size: 11.500px;
  line-height: 18px;
  color: #ddd;
}
.p-menu { position: absolute; left: 228px; top: 7px; }
.p-close { position: absolute; left: 251px; top: 8px; }
.p-opts {
  height: 28px;
  flex: none;
  display: flex;
  align-items: center;
  background: #3a3a3a;
}
.op-label {
  margin-left: 8px;
  width: 40px;
  font-size: 10.500px;
  color: #d4d4d4;
  white-space: nowrap;
}
.p-select {
  height: 20px;
  display: flex;
  align-items: center;
  justify-content: space-between;
  box-sizing: border-box;
  padding: 0 6px;
  background: #2a2a2a;
  font-size: 11.500px;
  color: #d4d4d4;
}
.sel-op { width: 75px; margin-left: 0; }
.sel-mode { width: 87px; margin-left: 4px; }
.gear { margin-left: 4px; }
.lock { margin-left: 10px; }
.layers { flex: 1; }
.layer {
  width: 245px;
  height: 31px;
  box-sizing: border-box;
  display: flex;
  align-items: center;
  border-bottom: 1px solid #0c0c0c;
  color: #a9a9a9;
  font-size: 12px;
}
.layer.active {
  background: #5b8ad0;
  color: #c8d8ee;
}
.thumb {
  width: 28px;
  height: 28px;
  margin-left: 21px;
  box-sizing: border-box;
  background: #2a2a2a;
  border: 1px solid #0e0e0e;
  display: flex;
  align-items: center;
  justify-content: center;
}
.thumb-t {
  width: 18px;
  height: 18px;
  background: #9a9a9a;
  color: #111;
  font: 17px/18px "Liberation Serif", serif;
  text-align: center;
}
.l-name { margin-left: 4px; flex: 1; }
.check {
  width: 12px;
  height: 12px;
  margin-right: 4px;
  border: 1px solid currentColor;
  border-radius: 2px;
  display: flex;
  align-items: center;
  justify-content: center;
}
.layer .check { color: #ddd; }
.layer.active .check { color: #b4c8e4; }
.p-foot {
  height: 23px;
  flex: none;
  display: flex;
  align-items: center;
  background: #3a3a3a;
}
.stack {
  width: 20px;
  height: 20px;
  margin-left: 5px;
  background: #2a2a2a;
  display: flex;
  align-items: center;
  justify-content: center;
}
.f1 { margin-left: 66px; }
.f2 { margin-left: 8px; }
.fx {
  margin-left: 9px;
  width: 14px;
  font: italic 13px "Liberation Serif", serif;
  color: #a4a4a4;
}
.f3 { margin-left: 7px; }
.f4 { margin-left: 28px; }
.f5 { margin-left: 10px; }
.f6 { margin-left: 10px; }
</style>
